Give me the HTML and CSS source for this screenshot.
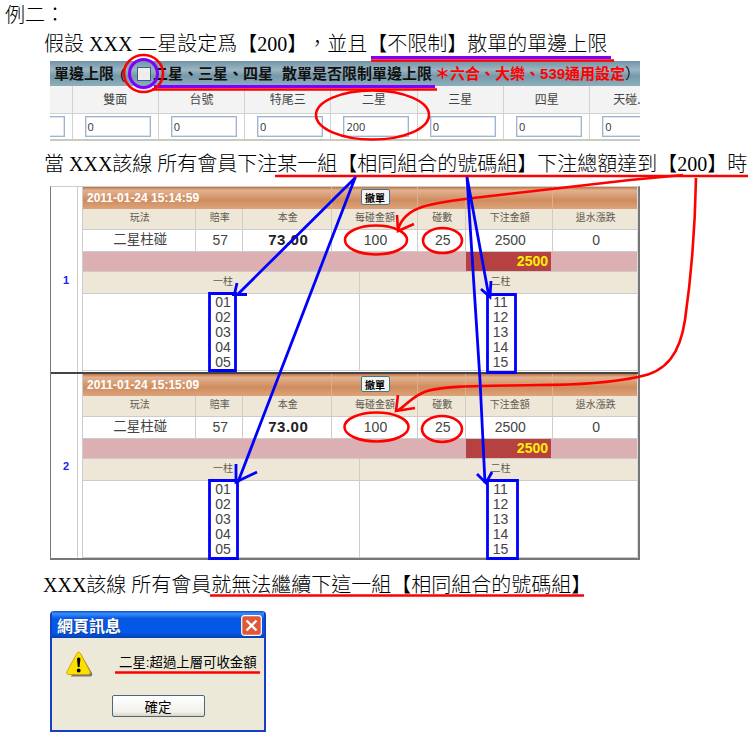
FILE: index.html
```html
<!DOCTYPE html>
<html lang="zh-Hant">
<head>
<meta charset="utf-8">
<title>例二</title>
<link rel="stylesheet" href="styles.css">
</head>
<body>
<main class="page">
  <p class="line line-title">例二：</p>
  <p class="line line-setting">假設 XXX 二星設定爲【200】，並且【不限制】散單的單邊上限</p>

  <section class="limits">
    <div class="limits-head">
      <span class="lh-a">單邊上限</span><span class="lh-p">(</span><i class="check"></i><span>二星、三星、四星</span><span class="lh-b">散單是否限制單邊上限</span><span class="lh-red">＊六合、大樂、539通用設定</span><span class="lh-end">）</span>
    </div>
    <div class="limits-grid">
      <div class="col"><b></b><div><span class="box"></span></div></div>
      <div class="col"><b>雙面</b><div><span class="box">0</span></div></div>
      <div class="col"><b>台號</b><div><span class="box">0</span></div></div>
      <div class="col"><b>特尾三</b><div><span class="box">0</span></div></div>
      <div class="col"><b>二星</b><div><span class="box">200</span></div></div>
      <div class="col"><b>三星</b><div><span class="box">0</span></div></div>
      <div class="col"><b>四星</b><div><span class="box">0</span></div></div>
      <div class="col"><b>天碰.</b><div><span class="box">0</span></div></div>
    </div>
  </section>

  <p class="line line-when">當 XXX該線 所有會員下注某一組【相同組合的號碼組】下注總額達到【200】時</p>

  <section class="orders">
    <article class="order">
      <div class="no">1</div>
      <div class="detail">
        <div class="row date"><span class="stamp">2011-01-24 15:14:59</span><span><button>撤單</button></span><span></span><span></span><span></span></div>
        <div class="row names"><span>玩法</span><span>賠率</span><span>本金</span><span>每碰金額</span><span>碰數</span><span>下注金額</span><span>退水漲跌</span></div>
        <div class="row values"><span class="play">二星柱碰</span><span>57</span><span class="cost">73.00</span><span>100</span><span>25</span><span>2500</span><span>0</span></div>
        <div class="row total"><span></span><span class="sum">2500</span><span></span></div>
        <div class="row pair"><span>一柱</span><span>二柱</span></div>
        <div class="row nums"><span>01<br>02<br>03<br>04<br>05</span><span>11<br>12<br>13<br>14<br>15</span></div>
      </div>
    </article>
    <article class="order">
      <div class="no">2</div>
      <div class="detail">
        <div class="row date"><span class="stamp">2011-01-24 15:15:09</span><span><button>撤單</button></span><span></span><span></span><span></span></div>
        <div class="row names"><span>玩法</span><span>賠率</span><span>本金</span><span>每碰金額</span><span>碰數</span><span>下注金額</span><span>退水漲跌</span></div>
        <div class="row values"><span class="play">二星柱碰</span><span>57</span><span class="cost">73.00</span><span>100</span><span>25</span><span>2500</span><span>0</span></div>
        <div class="row total"><span></span><span class="sum">2500</span><span></span></div>
        <div class="row pair"><span>一柱</span><span>二柱</span></div>
        <div class="row nums"><span>01<br>02<br>03<br>04<br>05</span><span>11<br>12<br>13<br>14<br>15</span></div>
      </div>
    </article>
  </section>

  <p class="line line-result">XXX該線 所有會員就無法繼續下這一組【相同組合的號碼組】</p>

  <section class="dialog">
    <header><span>網頁訊息</span>
      <svg class="close" viewBox="0 0 21 21"><rect x=".7" y=".7" width="19.6" height="19.6" rx="2.5" fill="#e0573a" stroke="#fff" stroke-width="1.2"/><path d="M5.5 5.5l10 10M15.5 5.5l-10 10" stroke="#fff" stroke-width="2.4"/></svg>
    </header>
    <div class="dialog-body">
      <div class="message">
        <svg class="warn" viewBox="0 0 27 27"><path d="M15 3.5L26 22q1 3.500-2 3.500H5z" fill="#777"/><path d="M11 2.200q1.700-2.600 3.400 0L24 20.500q1 3-2 3H2.800q-3 0-1.800-3z" fill="#fbe000" stroke="#c79a00" stroke-width=".8"/><path d="M11 7.500q1.700-2 3.400 0L13.600 16h-1.800z" fill="#000"/><circle cx="12.700" cy="19.500" r="1.900" fill="#000"/></svg>
        <span>二星:超過上層可收金額</span>
      </div>
      <button class="ok">確定</button>
    </div>
  </section>

  <svg class="marks" viewBox="0 0 753 738">
    <g class="purple">
      <path d="M371 57.500H611M154 86.500H435"/>
      <ellipse cx="143.500" cy="73.500" rx="14" ry="14"/>
    </g>
    <g class="red">
      <path d="M371 60.500H614M152 89.500H437M275 176H748M210 595.500H584M115 672.500H260"/>
      <ellipse cx="143.500" cy="73.500" rx="19.500" ry="18.500"/>
      <ellipse cx="372.500" cy="115" rx="56.500" ry="24.500"/>
      <ellipse cx="376" cy="240" rx="31" ry="14.500"/>
      <ellipse cx="442.500" cy="240.500" rx="19.500" ry="12.500"/>
      <ellipse cx="376.500" cy="427" rx="32" ry="14.500"/>
      <ellipse cx="442" cy="429" rx="20" ry="13"/>
      <path d="M683 175L630 180L482 197C430 203 404 206 398 230M397 215L398 231L414 224"/>
      <path d="M696 178C695 235 690 285 685 320C680 353 667 372 638 377C604 384 560 385 540 385C490 386 447 385 427 391C412 396 407 405 397 411M398 395L396 411L415 408"/>
    </g>
    <g class="blue">
      <path d="M356 177L237 295M355 178L238 482M467 177L489 297M467 177L480 380L485 483"/>
      <path d="M237 283L234 296M232 294.500H247M236 464V482L257 472M481 289L490 297L491 281M477 474L486 483L492 472"/>
      <path d="M209.500 293.500h26v77h-26zM487.500 294.500h28v78h-28zM209.500 480.500h28v78h-28zM487.500 480.500h30v78h-30z"/>
    </g>
  </svg>
</main>
</body>
</html>
```

FILE: styles.css
```css
* { box-sizing: border-box; }
body { margin: 0; background: #fff; color: #000; text-spacing-trim: space-all; }
.page {
  position: relative; width: 753px; height: 738px; overflow: hidden;
  display: flex; flex-direction: column;
  font-family: "Liberation Sans", "Noto Sans CJK TC", sans-serif;
}
.line {
  margin: 0; padding-left: 45px; flex: none; white-space: nowrap; display: flex; align-items: center;
  font: 300 20px/26px "Liberation Serif", "Noto Sans CJK TC", serif;
}
.line-title { height: 30px; padding-left: 5px; }
.line-setting { height: 31px; padding: 0 0 4px 44px; }
.line-when { height: 45px; padding-left: 44px; }
.line-result { height: 51px; padding: 0 0 2px 43px; }

.limits { flex: none; width: 590px; height: 80px; margin-left: 50px; overflow: hidden; background: #f3f3f3; border-bottom: 2px solid #c9c9be; }
.limits-head {
  height: 25px; display: flex; align-items: center; padding-left: 4px; white-space: nowrap;
  font: bold 15px/24px "Liberation Sans", "Noto Sans CJK TC", sans-serif; color: #111;
  background: linear-gradient(#7293a5, #9bb5c3 35%, #7599aa 60%, #8dafbd);
}
.limits-head > * { flex: none; }
.lh-p { width: 23px; padding-left: 6px; font-weight: normal; }
.check { width: 14px; height: 14px; margin-right: 2px; border: 1px solid #31647f; background: #eee; }
.lh-b { margin-left: 9px; }
.lh-red { color: #f00; margin-left: 3px; }
.lh-end { font-weight: normal; }
.limits-grid { display: grid; grid-template-columns: 22.5px repeat(6, 86.3px) 1fr; height: 53px; }
.col { border-right: 1px solid #d2d2d2; overflow: hidden; color: #444; }
.col b { display: block; height: 28px; font: 12px/25px "Noto Sans CJK TC", sans-serif; text-align: center; border-bottom: 1px solid #d2d2d2; }
.col div { height: 25px; padding: 2px 0 0 12px; background: #fff; }
.col:first-child div { display: flex; justify-content: flex-end; padding-right: 7px; }
.col:last-child { border-right: 0; }
.col:last-child b { padding-left: 23px; text-align: left; white-space: nowrap; }
.box { display: block; flex: none; width: 66px; height: 21px; border: 1px solid #9eb5d2; box-shadow: inset 0 0 0 .5px #b9cbe0; padding-left: 2px; color: #333; font: 11px/20px "Open Sans", sans-serif; }

.orders { flex: none; width: 590px; height: 374px; margin-left: 50px; border: 1px solid #777; border-top-color: #ccc; border-width: 1px 2px 2px 1px; overflow: hidden; }
.order { height: 187px; display: grid; grid-template-columns: 26px 1fr; column-gap: 5px; background: linear-gradient(90deg, #fff 26px, #ccc 26px, #ccc 27px, #fff 27px); }
.order:first-child { border-bottom: 2px solid #444; }
.order:last-child { height: 184px; }
.no { display: flex; align-items: center; justify-content: center; padding-left: 4px; color: #2020f0; font: bold 11px "Liberation Sans", sans-serif; }
.detail { border-left: 1px solid #ccc; border-right: 1px solid #ddd; }
.row { display: grid; grid-template-columns: 112.500px 47.500px 88.500px 86px 48.500px 86.500px 1fr; height: 21px; font-size: 14px; line-height: 20px; color: #444; text-align: center; }
.row > span { border-right: 1px solid #d2ccc6; border-bottom: 1px solid #ccc; white-space: nowrap; }
.row > span:last-child { border-right: 0; }
.date { height: 22px; background: linear-gradient(#bd7544, #e2b18f 15%, #cf8c5e 60%, #dda37a); }
.date > span { border-bottom: 0; border-color: #dfae8c; }
.date .stamp { grid-column: span 3; text-align: left; padding-left: 4px; color: #fff; font-weight: bold; font-size: 12px; line-height: 22px; }
.date button { width: 29px; height: 16px; margin: 2px 0 0 29px; padding: 0; display: block; border: 1px solid #45758c; border-radius: 2px; background: #f3f3f0; color: #000; font: bold 10px/13px "Noto Sans CJK TC", sans-serif; }
.names { background: #eee7d7; font-size: 10px; line-height: 18px; color: #5e5a50; }
.names > span { padding-left: 2px; }
.values { height: 22px; background: #fff; line-height: 20px; }
.values > span { padding-left: 3px; }
.play { font-size: 13.500px; line-height: 19px; }
.cost { font-weight: bold; font-size: 15px; letter-spacing: .5px; color: #222; }
.total { height: 20px; grid-template-columns: 382.500px 86.500px 1fr; background: #dcb0b3; }
.total > span { border-right-color: #dcb0b3; }
.total .sum { background: #b64141; color: #ffef00; font-weight: bold; text-align: right; padding-right: 3px; line-height: 18px; }
.pair, .nums { grid-template-columns: 277px 1fr; }
.pair { height: 22px; background: #eee7d7; font-size: 10px; line-height: 20px; color: #5e5a50; }
.pair > span, .nums > span { padding-left: 4px; }
.nums { height: 77px; line-height: 15px; }
.nums > span { padding-top: 1px; }
.order:last-child .nums { height: 76px; }

.dialog { flex: none; width: 216px; height: 121px; margin-left: 50px; border: 2px solid #1540c4; border-top: 0; border-radius: 4px 4px 0 0; background: #ece9d8; overflow: hidden; }
.dialog header { height: 27px; display: flex; align-items: center; justify-content: space-between; padding: 2px 2px 0 5px; background: linear-gradient(#0b4fd0, #3b8bfa 10%, #0458e2 28%, #0458ea 80%, #0340b8); color: #fff; font: bold 16px/24px "Noto Sans CJK TC", sans-serif; text-shadow: 1px 1px #123a90; }
.dialog header span { position: relative; top: -1px; }
.close { width: 21px; height: 21px; }
.dialog-body { display: flex; flex-direction: column; align-items: center; }
.message { align-self: stretch; height: 57px; display: flex; padding: 13px 0 0 14px; }
.warn { width: 27px; height: 27px; margin-right: 26px; }
.message span { font: 13.400px/24px "Liberation Sans", "Noto Sans CJK TC", sans-serif; white-space: nowrap; }
.ok { width: 93px; height: 22px; padding: 0; border: 1px solid #4b6680; border-radius: 2px; background: linear-gradient(#fff, #f1f0ea 80%, #d9d2c2); color: #000; font: 13.500px/19px "Noto Sans CJK TC", sans-serif; }

.marks { position: absolute; left: 0; top: 0; width: 753px; height: 738px; fill: none; stroke-width: 2.6; pointer-events: none; }
.red { stroke: #f00; }
.blue { stroke: #00f; stroke-width: 2.8; }
.purple { stroke: #8000ff; stroke-width: 3; }
```
